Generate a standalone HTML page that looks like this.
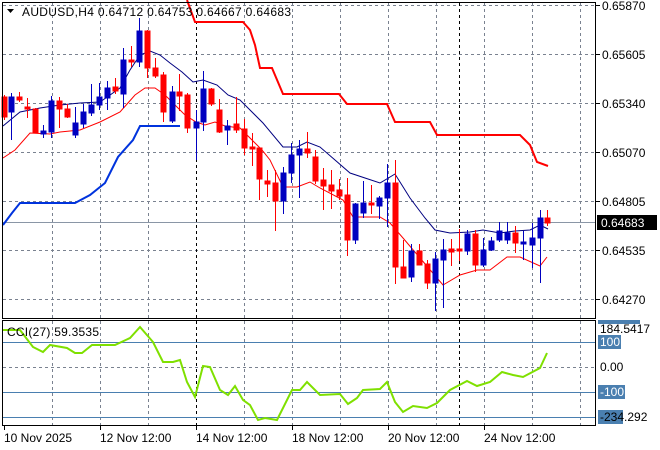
<!DOCTYPE html>
<html><head><style>
body{margin:0;background:#fff;width:660px;height:450px;overflow:hidden}
svg{display:block}
text{font-family:"Liberation Sans",sans-serif;font-size:12px;fill:#000}
</style></head><body>
<svg width="660" height="450" viewBox="0 0 660 450">
<g stroke="#7a8290" stroke-dasharray="3,3" stroke-width="1">
<line x1="3" y1="5.5" x2="595" y2="5.5"/><line x1="3" y1="54.5" x2="595" y2="54.5"/><line x1="3" y1="103.5" x2="595" y2="103.5"/><line x1="3" y1="152.5" x2="595" y2="152.5"/><line x1="3" y1="201.5" x2="595" y2="201.5"/><line x1="3" y1="250.5" x2="595" y2="250.5"/><line x1="3" y1="299.5" x2="595" y2="299.5"/>
<line x1="3" y1="367.5" x2="595" y2="367.5"/>
<g>
<line x1="52.5" y1="3" x2="52.5" y2="318"/><line x1="100.5" y1="3" x2="100.5" y2="318"/><line x1="148.5" y1="3" x2="148.5" y2="318"/><line x1="244.5" y1="3" x2="244.5" y2="318"/><line x1="292.5" y1="3" x2="292.5" y2="318"/><line x1="340.5" y1="3" x2="340.5" y2="318"/><line x1="388.5" y1="3" x2="388.5" y2="318"/><line x1="436.5" y1="3" x2="436.5" y2="318"/><line x1="484.5" y1="3" x2="484.5" y2="318"/><line x1="532.5" y1="3" x2="532.5" y2="318"/><line x1="580.5" y1="3" x2="580.5" y2="318"/>
<line x1="52.5" y1="321" x2="52.5" y2="425"/><line x1="100.5" y1="321" x2="100.5" y2="425"/><line x1="148.5" y1="321" x2="148.5" y2="425"/><line x1="244.5" y1="321" x2="244.5" y2="425"/><line x1="292.5" y1="321" x2="292.5" y2="425"/><line x1="340.5" y1="321" x2="340.5" y2="425"/><line x1="388.5" y1="321" x2="388.5" y2="425"/><line x1="436.5" y1="321" x2="436.5" y2="425"/><line x1="484.5" y1="321" x2="484.5" y2="425"/><line x1="532.5" y1="321" x2="532.5" y2="425"/><line x1="580.5" y1="321" x2="580.5" y2="425"/>
</g>
</g>
<g stroke="#000" stroke-dasharray="3,3"><line x1="196.5" y1="3" x2="196.5" y2="318"/><line x1="459.5" y1="3" x2="459.5" y2="318"/><line x1="196.5" y1="321" x2="196.5" y2="425"/><line x1="459.5" y1="321" x2="459.5" y2="425"/></g>
<line x1="3" y1="222.5" x2="595" y2="222.5" stroke="#8a96a6"/>
<g stroke="#4a7fb0"><line x1="3" y1="342.5" x2="595" y2="342.5"/><line x1="3" y1="392.5" x2="595" y2="392.5"/><line x1="3" y1="417.5" x2="595" y2="417.5"/></g>

<polyline fill="none" stroke="#f00" stroke-width="2" points="187,0 195,22 243,22 250,30 255,45 260,68 272,68 283,94 339,94 347,104 387,104 395,122 430,122 437,135 520,135 530,145 537,162 548,166"/>
<polyline fill="none" stroke="#0033dd" stroke-width="2" points="3,225 12,213 20,203 75,203 90,195 105,183 118,157 133,140 140,126 180,126"/>
<polyline fill="none" stroke="#000080" stroke-width="1" points="3,126 20,112 40,108 60,105 80,103 100,102 120,88 130,70 140,55 150,51 160,55 170,63 182,72 193,82 203,80 217,85 228,95 240,100 250,110 263,123 283,147 297,147 307,142 320,147 335,160 350,173 365,178 380,183 395,174 410,198 425,218 435,230 450,233 470,232 483,230 500,233 515,231 530,230 540,225 548,229"/>
<polyline fill="none" stroke="#f00" stroke-width="1" points="3,158 15,150 30,133 50,134 60,132 80,130 100,122 120,112 135,95 145,88 155,88 165,95 175,105 185,115 196,122 205,125 215,122 225,126 240,128 262,150 270,160 283,187 297,187 310,182 320,188 343,200 353,217 380,217 390,223 403,238 420,258 443,285 460,275 477,270 490,270 507,257 520,257 540,266 547,257"/>

<g>
<g stroke="#f00" fill="#f00">
<line x1="4.5" y1="95" x2="4.5" y2="120"/><rect x="2" y="97" width="5" height="20"/>
<line x1="19.5" y1="92" x2="19.5" y2="102"/><rect x="17" y="97" width="5" height="3"/>
<line x1="27.5" y1="98" x2="27.5" y2="118"/><rect x="25" y="107" width="5" height="2"/>
<line x1="35.5" y1="108" x2="35.5" y2="133"/><rect x="33" y="109" width="5" height="24"/>
<line x1="59.5" y1="97" x2="59.5" y2="128"/><rect x="57" y="101" width="5" height="8"/>
<line x1="67.5" y1="104" x2="67.5" y2="118"/><rect x="65" y="109" width="5" height="8"/>
<line x1="115.5" y1="78" x2="115.5" y2="94"/><rect x="113" y="87" width="5" height="4"/>
<line x1="131.5" y1="46" x2="131.5" y2="67"/><rect x="129" y="60" width="5" height="2"/>
<line x1="147.5" y1="30" x2="147.5" y2="78"/><rect x="145" y="31" width="5" height="37"/>
<line x1="155.5" y1="58" x2="155.5" y2="78"/><rect x="153" y="68" width="5" height="8"/>
<line x1="163.5" y1="72" x2="163.5" y2="122"/><rect x="161" y="75" width="5" height="37"/>
<line x1="179.5" y1="74" x2="179.5" y2="111"/><rect x="177" y="92" width="5" height="4"/>
<line x1="187.5" y1="93" x2="187.5" y2="133"/><rect x="185" y="95" width="5" height="33"/>
<line x1="211.5" y1="88" x2="211.5" y2="106"/><rect x="209" y="89" width="5" height="15"/>
<line x1="219.5" y1="99" x2="219.5" y2="133"/><rect x="217" y="110" width="5" height="22"/>
<line x1="236.5" y1="97" x2="236.5" y2="133"/><rect x="234" y="124" width="5" height="6"/>
<line x1="244.5" y1="119" x2="244.5" y2="155"/><rect x="242" y="129" width="5" height="19"/>
<line x1="252.5" y1="133" x2="252.5" y2="166"/><rect x="250" y="147" width="5" height="2"/>
<line x1="259.5" y1="148" x2="259.5" y2="200"/><rect x="257" y="148" width="5" height="31"/>
<line x1="267.5" y1="170" x2="267.5" y2="197"/><rect x="265" y="181" width="5" height="3"/>
<line x1="275.5" y1="170" x2="275.5" y2="231"/><rect x="273" y="183" width="5" height="18"/>
<line x1="307.5" y1="132" x2="307.5" y2="158"/><rect x="305" y="149" width="5" height="4"/>
<line x1="315.5" y1="150" x2="315.5" y2="184"/><rect x="313" y="157" width="5" height="24"/>
<line x1="323.5" y1="168" x2="323.5" y2="210"/><rect x="321" y="180" width="5" height="6"/>
<line x1="331.5" y1="170" x2="331.5" y2="209"/><rect x="329" y="185" width="5" height="6"/>
<line x1="339.5" y1="179" x2="339.5" y2="200"/><rect x="337" y="190" width="5" height="6"/>
<line x1="347.5" y1="178" x2="347.5" y2="256"/><rect x="345" y="195" width="5" height="45"/>
<line x1="371.5" y1="185" x2="371.5" y2="214"/><rect x="369" y="203" width="5" height="2"/>
<line x1="395.5" y1="160" x2="395.5" y2="284"/><rect x="393" y="183" width="5" height="84"/>
<line x1="403.5" y1="240" x2="403.5" y2="278"/><rect x="401" y="267" width="5" height="11"/>
<line x1="419.5" y1="244" x2="419.5" y2="265"/><rect x="417" y="251" width="5" height="14"/>
<line x1="427.5" y1="260" x2="427.5" y2="289"/><rect x="425" y="264" width="5" height="19"/>
<line x1="451.5" y1="239" x2="451.5" y2="266"/><rect x="449" y="249" width="5" height="3"/>
<line x1="459.5" y1="229" x2="459.5" y2="261"/><rect x="457" y="249" width="5" height="2"/>
<line x1="475.5" y1="230" x2="475.5" y2="272"/><rect x="473" y="234" width="5" height="31"/>
<line x1="515.5" y1="226" x2="515.5" y2="253"/><rect x="513" y="233" width="5" height="10"/>
<line x1="547.5" y1="210" x2="547.5" y2="226"/><rect x="545" y="218" width="5" height="5"/>
</g>
<g stroke="#0000c0" fill="#0000c0">
<line x1="11.5" y1="93" x2="11.5" y2="140"/><rect x="9" y="97" width="5" height="15"/>
<line x1="43.5" y1="125" x2="43.5" y2="138"/><rect x="41" y="131" width="5" height="3"/>
<line x1="51.5" y1="96" x2="51.5" y2="138"/><rect x="49" y="101" width="5" height="31"/>
<line x1="75.5" y1="107" x2="75.5" y2="138"/><rect x="73" y="123" width="5" height="12"/>
<line x1="83.5" y1="104" x2="83.5" y2="128"/><rect x="81" y="112" width="5" height="12"/>
<line x1="91.5" y1="84" x2="91.5" y2="116"/><rect x="89" y="105" width="5" height="8"/>
<line x1="99.5" y1="83" x2="99.5" y2="110"/><rect x="97" y="97" width="5" height="8"/>
<line x1="107.5" y1="81" x2="107.5" y2="110"/><rect x="105" y="88" width="5" height="10"/>
<line x1="123.5" y1="48" x2="123.5" y2="108"/><rect x="121" y="60" width="5" height="34"/>
<line x1="139.5" y1="18" x2="139.5" y2="67"/><rect x="137" y="31" width="5" height="31"/>
<line x1="172.5" y1="86" x2="172.5" y2="123"/><rect x="170" y="92" width="5" height="29"/>
<line x1="196.5" y1="110" x2="196.5" y2="160"/><rect x="194" y="122" width="5" height="6"/>
<line x1="203.5" y1="71" x2="203.5" y2="131"/><rect x="201" y="89" width="5" height="33"/>
<line x1="227.5" y1="120" x2="227.5" y2="145"/><rect x="225" y="126" width="5" height="4"/>
<line x1="283.5" y1="167" x2="283.5" y2="214"/><rect x="281" y="173" width="5" height="28"/>
<line x1="291.5" y1="143" x2="291.5" y2="183"/><rect x="289" y="155" width="5" height="18"/>
<line x1="299.5" y1="140" x2="299.5" y2="198"/><rect x="297" y="149" width="5" height="6"/>
<line x1="355.5" y1="203" x2="355.5" y2="244"/><rect x="353" y="204" width="5" height="36"/>
<line x1="363.5" y1="181" x2="363.5" y2="218"/><rect x="361" y="203" width="5" height="10"/>
<line x1="379.5" y1="196" x2="379.5" y2="219"/><rect x="377" y="198" width="5" height="8"/>
<line x1="387.5" y1="164" x2="387.5" y2="227"/><rect x="385" y="183" width="5" height="15"/>
<line x1="411.5" y1="244" x2="411.5" y2="282"/><rect x="409" y="251" width="5" height="26"/>
<line x1="435.5" y1="252" x2="435.5" y2="311"/><rect x="433" y="259" width="5" height="24"/>
<line x1="443.5" y1="239" x2="443.5" y2="308"/><rect x="441" y="250" width="5" height="10"/>
<line x1="467.5" y1="230" x2="467.5" y2="255"/><rect x="465" y="234" width="5" height="17"/>
<line x1="483.5" y1="238" x2="483.5" y2="267"/><rect x="481" y="250" width="5" height="15"/>
<line x1="491.5" y1="237" x2="491.5" y2="251"/><rect x="489" y="241" width="5" height="9"/>
<line x1="499.5" y1="222" x2="499.5" y2="242"/><rect x="497" y="231" width="5" height="9"/>
<line x1="507.5" y1="222" x2="507.5" y2="244"/><rect x="505" y="233" width="5" height="7"/>
<line x1="523.5" y1="231" x2="523.5" y2="260"/><rect x="521" y="242" width="5" height="2"/>
<line x1="532.5" y1="223" x2="532.5" y2="268"/><rect x="530" y="238" width="5" height="7"/>
<line x1="540.5" y1="210" x2="540.5" y2="283"/><rect x="538" y="218" width="5" height="20"/>
</g>
</g>

<polyline fill="none" stroke="#7fe000" stroke-width="2" points="3,330 20,330 33,347 43,352 50,345 67,348 75,353 82,353 92,345 115,345 130,338 140,327 153,342 163,362 173,362 180,360 187,382 195,397 203,366 210,367 220,390 228,395 235,386 243,400 250,405 258,420 265,418 277,420 292,390 300,390 307,382 320,395 340,394 348,404 357,398 363,390 380,389 387,382 395,402 403,412 413,406 427,408 437,403 450,390 467,381 477,386 490,382 502,372 513,375 523,377 540,368 547,353"/>

<rect x="2.5" y="2.5" width="593" height="316" fill="none" stroke="#000"/>
<rect x="2.5" y="320.5" width="593" height="105" fill="none" stroke="#000"/>
<g stroke="#000">
<line x1="596" y1="5.5" x2="600" y2="5.5"/><line x1="596" y1="54.5" x2="600" y2="54.5"/><line x1="596" y1="103.5" x2="600" y2="103.5"/><line x1="596" y1="152.5" x2="600" y2="152.5"/><line x1="596" y1="201.5" x2="600" y2="201.5"/><line x1="596" y1="250.5" x2="600" y2="250.5"/><line x1="596" y1="299.5" x2="600" y2="299.5"/>
<line x1="4.5" y1="426" x2="4.5" y2="430"/><line x1="100.5" y1="426" x2="100.5" y2="430"/><line x1="196.5" y1="426" x2="196.5" y2="430"/><line x1="292.5" y1="426" x2="292.5" y2="430"/><line x1="388.5" y1="426" x2="388.5" y2="430"/><line x1="484.5" y1="426" x2="484.5" y2="430"/>
</g>

<path d="M7,9 L14,9 L10.5,13 Z" fill="#000"/>
<text x="22" y="16" textLength="269" lengthAdjust="spacing">AUDUSD,H4  0.64712 0.64753 0.64667 0.64683</text>
<text x="7" y="336" textLength="92" lengthAdjust="spacing">CCI(27) 59.3535</text>

<text x="602" y="10">0.65870</text>
<text x="602" y="59">0.65605</text>
<text x="602" y="108">0.65340</text>
<text x="602" y="157">0.65070</text>
<text x="602" y="206">0.64805</text>
<text x="602" y="255">0.64535</text>
<text x="602" y="304">0.64270</text>
<rect x="597" y="215" width="60" height="15" fill="#000"/>
<text x="601" y="227" style="fill:#fff">0.64683</text>

<rect x="598" y="320" width="42" height="4" fill="#4a7fb0"/>
<text x="600" y="333">184.5417</text>
<rect x="598" y="335" width="23" height="14" fill="#4a7fb0"/>
<text x="600" y="346" style="fill:#fff">100</text>
<text x="600" y="371">0.00</text>
<rect x="598" y="385" width="27" height="14" fill="#4a7fb0"/>
<text x="600" y="396" style="fill:#fff">-100</text>
<rect x="598" y="410" width="25" height="14" fill="#4a7fb0"/>
<text x="600" y="421">-234.292</text>

<text x="4" y="442">10 Nov 2025</text>
<text x="100" y="442">12 Nov 12:00</text>
<text x="196" y="442">14 Nov 12:00</text>
<text x="292" y="442">18 Nov 12:00</text>
<text x="388" y="442">20 Nov 12:00</text>
<text x="484" y="442">24 Nov 12:00</text>
</svg>
</body></html>
